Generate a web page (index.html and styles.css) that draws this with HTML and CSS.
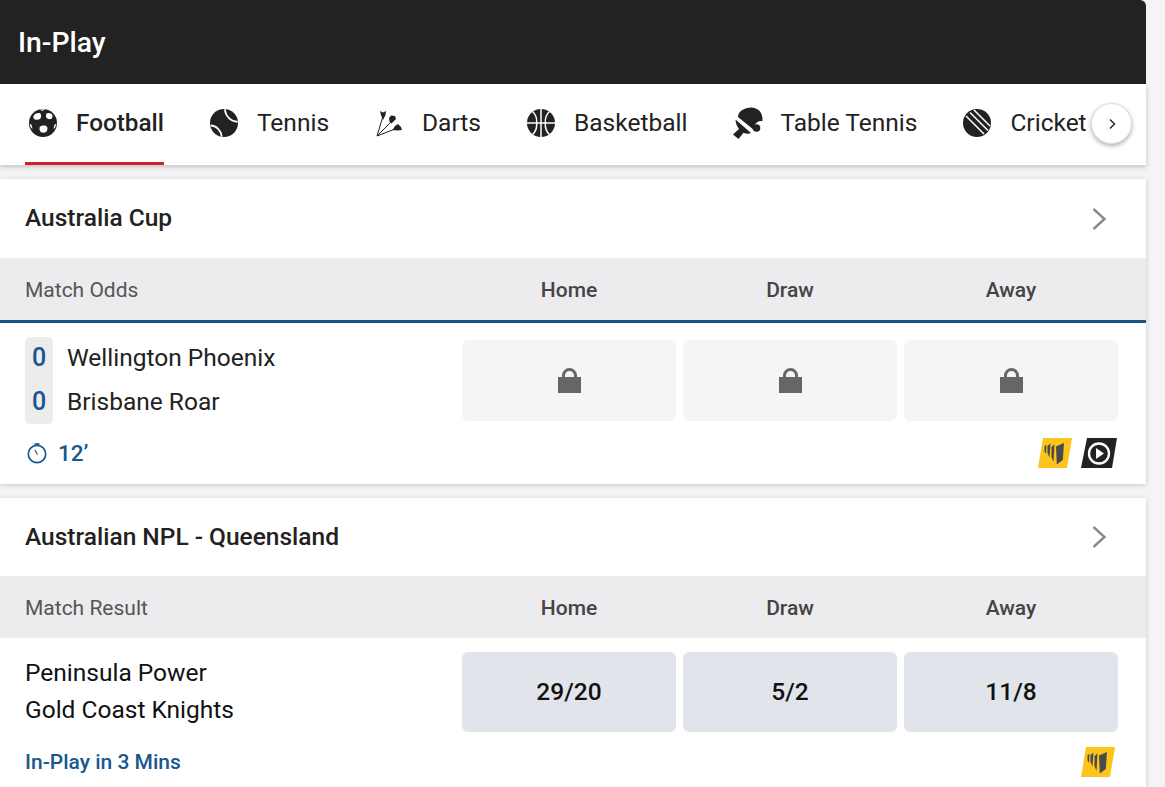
FILE: index.html
```html
<!DOCTYPE html>
<html lang="en">
<head>
<meta charset="utf-8">
<title>In-Play</title>
<link rel="stylesheet" href="styles.css">
</head>
<body>
<main class="page">
  <header class="title"><h1>In-Play</h1></header>
  <nav class="tabs">
    <a class="tab active"><svg class="ico" viewBox="0 0 28 28"><circle cx="14" cy="14" r="14" fill="#222"/><path d="M4.500 7c1-2.500 4-3.500 6.500-3 1.500 1 1.500 4.500 0 6-2 1.200-5 1-6-.2-.7-.8-.9-1.800-.5-2.800zM17.500 4.500c1.500-1 3.500-.8 5.500.8 1 1.500.5 4-1 4.700-2 .5-4-.2-4.800-1.800-.3-1.400-.2-2.900.3-3.700zM11 17.500c1.800-1.500 5.500-1.500 7 0 .8 1.700.5 4.500-1 5.500-1.700 1-4.500.8-5.500-.2-1.200-1.400-1.300-3.900-.5-5.300zM.7 14.500l2 1.500 .8 4-1.700-1.500zM27.300 14.500l-2 1.500-.8 4 1.700-1.500zM10.500.5l3 1.500 3-1.700z" fill="#fff"/></svg><span>Football</span></a>
    <a class="tab"><svg class="ico" viewBox="0 0 28 28"><circle cx="14" cy="14" r="14" fill="#222"/><path d="M15 .3c.2 6.500 5.500 12 12.700 12.500M.6 16.500c6 .2 10.500 5 11.200 11.200" fill="none" stroke="#fff" stroke-width="1.800"/></svg><span>Tennis</span></a>
    <a class="tab"><svg class="ico" viewBox="6 6 28 28"><path d="M8 33L14 13M8 33L22 19M8 33L26 26" stroke="#222" stroke-width="1" fill="none"/><path d="M11 8l3 1.500L17 8l-.5 4-2.500 5-2-5zM20 15l2-2.500 4 .5 1 3-4.500 4.500-2-2zM26 23l3-2 3 3 1 3-5 .5-4.500-.5z" fill="#222"/></svg><span>Darts</span></a>
    <a class="tab"><svg class="ico" viewBox="0 0 28 28"><circle cx="14" cy="14" r="14" fill="#222"/><path d="M14 0v28M0 14h28M5.500 2.500c3.500 3 4.500 7 4.200 11.500M22.500 2.500c-3.500 3-4.500 7-4.200 11.500M5.500 25.500c3.500-3 4.500-7 4.200-11.500M22.500 25.500c-3.500-3-4.500-7-4.200-11.500" fill="none" stroke="#fff" stroke-width="1.500"/></svg><span>Basketball</span></a>
    <a class="tab"><svg class="ico ico-tt" viewBox="6 6 32 32"><path d="M11 16c0-6 7-9.500 13-9.500 7 0 11.500 5 11.500 11.500 0 .8-.1 1.500-.2 2.200a7 7 0 0 0-8.300 6 6 6 0 0 0 .2 2.500l-.2.300z" fill="#222"/><path d="M8.500 18.500L24 32c-2.500 1-5 .8-7.500-.2L11.500 38 6 33.500l6-5.500c-2.200-2.800-3.400-6-3.500-9.500z" fill="#222"/><circle cx="29.500" cy="27" r="3.800" fill="#222"/></svg><span>Table Tennis</span></a>
    <a class="tab"><svg class="ico" viewBox="0 0 28 28"><circle cx="14" cy="14" r="14" fill="#222"/><path d="M3 7l18 18M7 3.500l18 18M11 1l16 16" stroke="#fff" stroke-width="1.500" fill="none"/></svg><span>Cricket</span></a>
    <button class="next" type="button" aria-label="Next"><svg viewBox="0 0 10 12" width="10" height="12"><path d="M3 1.500L7.500 6 3 10.500" fill="none" stroke="#222" stroke-width="1.400"/></svg></button>
  </nav>

  <section class="card first">
    <div class="comp"><h2>Australia Cup</h2><svg class="chev" viewBox="0 0 16 24"><path d="M2.500 2l11 10-11 10" fill="none" stroke="#8a8a8a" stroke-width="2.400"/></svg></div>
    <div class="grid head live"><span class="mkt">Match Odds</span><b>Home</b><b>Draw</b><b>Away</b></div>
    <div class="grid row row-live">
      <div class="teams">
        <div class="scores"><span>0</span><span>0</span></div>
        <div class="names"><span>Wellington Phoenix</span><span>Brisbane Roar</span></div>
      </div>
      <div class="odd locked"><svg viewBox="0 0 23 25" width="23" height="25"><path d="M5.500 10V7.500a6 6 0 0 1 12 0V10" fill="none" stroke="#666" stroke-width="3"/><rect y="9" width="23" height="16" fill="#666"/></svg></div>
      <div class="odd locked"><svg viewBox="0 0 23 25" width="23" height="25"><path d="M5.500 10V7.500a6 6 0 0 1 12 0V10" fill="none" stroke="#666" stroke-width="3"/><rect y="9" width="23" height="16" fill="#666"/></svg></div>
      <div class="odd locked"><svg viewBox="0 0 23 25" width="23" height="25"><path d="M5.500 10V7.500a6 6 0 0 1 12 0V10" fill="none" stroke="#666" stroke-width="3"/><rect y="9" width="23" height="16" fill="#666"/></svg></div>
    </div>
    <div class="foot foot-live">
      <span class="time"><svg viewBox="0 0 20 22" width="20" height="22"><circle cx="10" cy="12" r="8.700" fill="none" stroke="#18578f" stroke-width="1.700"/><path d="M7.500 2h5" stroke="#18578f" stroke-width="1.700"/><path d="M8 8l2.500 4.500" stroke="#18578f" stroke-width="1.200"/></svg>12’</span>
      <span class="badges">
        <svg class="badge" viewBox="0 0 34 30" width="34" height="30"><path d="M5 0h29l-5 30H0z" fill="#fcc51c"/><path d="M18 8.500l8-3.500-1.200 17-6 4.500zM16.500 6.500l-3 2.500v10l2 5zM12.500 5.500l-3 2.500v7l2 4.500zM8.500 6.500l-2 2v5l1.500 2.500z" fill="#4a4a4a"/></svg>
        <svg class="badge" viewBox="0 0 36 30" width="36" height="30"><path d="M6 0h30l-5 30H0z" fill="#222"/><circle cx="18" cy="15.500" r="10" fill="none" stroke="#fff" stroke-width="2.300"/><path d="M15 10l8 5.500-8 5.500z" fill="#fff"/></svg>
      </span>
    </div>
  </section>

  <section class="card">
    <div class="comp"><h2>Australian NPL - Queensland</h2><svg class="chev" viewBox="0 0 16 24"><path d="M2.500 2l11 10-11 10" fill="none" stroke="#8a8a8a" stroke-width="2.400"/></svg></div>
    <div class="grid head"><span class="mkt">Match Result</span><b>Home</b><b>Draw</b><b>Away</b></div>
    <div class="grid row row-pre">
      <div class="names pre"><span>Peninsula Power</span><span>Gold Coast Knights</span></div>
      <div class="odd">29/20</div>
      <div class="odd">5/2</div>
      <div class="odd">11/8</div>
    </div>
    <div class="foot foot-pre">
      <span class="time soon">In-Play in 3 Mins</span>
      <span class="badges">
        <svg class="badge" viewBox="0 0 34 30" width="34" height="30"><path d="M5 0h29l-5 30H0z" fill="#fcc51c"/><path d="M18 8.500l8-3.500-1.200 17-6 4.500zM16.500 6.500l-3 2.500v10l2 5zM12.500 5.500l-3 2.500v7l2 4.500zM8.500 6.500l-2 2v5l1.500 2.500z" fill="#4a4a4a"/></svg>
      </span>
    </div>
  </section>
</main>
</body>
</html>
```
FILE: styles.css
```css
* { box-sizing: border-box; }
html, body { margin: 0; height: 787px; overflow: hidden; }
body { background: #f4f3f5; font-family: Roboto, "Liberation Sans", sans-serif; color: #222; }
.page { width: 1146px; }
.title { height: 84px; background: #222; border-top-right-radius: 6px; display: flex; align-items: center; padding: 1px 0 0 18px; }
.title h1 { margin: 0; font-size: 28.3px; font-weight: 500; color: #fff; }
.tabs { height: 81px; background: #fff; display: flex; position: relative; padding-left: 25px; box-shadow: 0 2px 5px rgba(0,0,0,.2); }
.tab { display: flex; align-items: center; gap: 19px; font-size: 24.5px; height: 81px; padding-bottom: 3px; margin-right: 46px; white-space: nowrap; }
.tab span { padding-bottom: 2px; }
.tab.active { font-size: 24.3px; font-weight: 500; border-bottom: 3px solid #c8232c; padding-bottom: 0; }
.tab.active .ico { margin-left: 4px; }
.ico { width: 28px; height: 28px; flex: none; }
.ico-tt { width: 32px; height: 32px; margin-right: -4px; }
.next { position: absolute; left: 1091px; top: 19px; width: 41px; height: 41px; padding: 0; border: 1px solid #ddd; border-radius: 50%; background: #fff; box-shadow: 0 2px 4px rgba(0,0,0,.3); display: flex; align-items: center; justify-content: center; }
.card { background: #fff; margin-top: 14px; box-shadow: 0 1px 5px rgba(0,0,0,.18); }
.comp { height: 78px; display: flex; align-items: center; justify-content: space-between; padding: 0 39px 2px 25px; }
.first .comp { height: 79px; }
.comp h2 { margin: 0; font-size: 24.5px; font-weight: 500; }
.chev { width: 16px; height: 24px; margin-top: 2px; }
.grid { display: grid; grid-template-columns: 430px 214px 214px 214px; column-gap: 7px; margin-left: 25px; }
.head { margin-left: 0; padding: 1px 0 0 25px; height: 62px; background: #ecebee; align-items: center; font-size: 21px; }
.head.live { height: 65px; border-bottom: 3px solid #18538a; padding-top: 2px; }
.head b { font-weight: 500; text-align: center; color: #444; }
.mkt { color: #555; }
.row-live { padding-top: 17px; height: 98px; }
.row-pre { padding-top: 14px; height: 94px; }
.teams { display: flex; gap: 14px; height: 87px; margin-top: -3px; }
.scores { width: 28px; padding-top: 1px; background: #ececec; border-radius: 5px; display: flex; flex-direction: column; align-items: center; gap: 4px; line-height: 40px; color: #18578f; font-size: 25px; font-weight: 500; }
.names { display: flex; flex-direction: column; gap: 4px; padding-top: 1px; line-height: 40px; font-size: 24.5px; }
.names.pre { gap: 0; line-height: 37px; padding-top: 2px; color: #111; }
.odd { height: 81px; background: #e2e4eb; border-radius: 6px; display: flex; align-items: center; justify-content: center; font-size: 24.5px; font-weight: 500; color: #111; }
.row-pre .odd { height: 80px; padding-bottom: 2px; }
.locked { background: #f5f5f7; }
.foot { display: flex; justify-content: space-between; align-items: center; padding: 0 29px 0 25px; }
.foot-live { height: 63px; padding-top: 1px; }
.foot-pre { height: 60px; padding-right: 31px; }
.time { display: flex; align-items: center; gap: 11px; color: #18578f; font-size: 21px; font-weight: 500; }
.foot-live .time { font-size: 22.5px; padding-left: 2px; }
.badges { display: flex; gap: 9px; align-items: center; }
```
